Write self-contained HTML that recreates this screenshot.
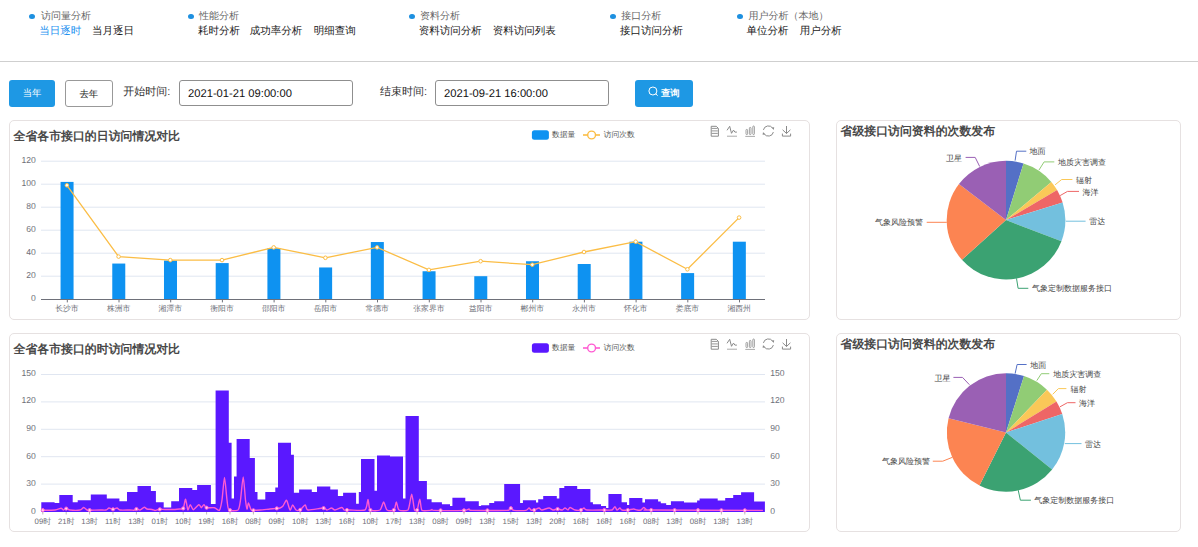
<!DOCTYPE html>
<html><head><meta charset="utf-8"><style>
html,body{margin:0;padding:0;background:#fff;width:1198px;height:547px;overflow:hidden;position:relative;font-family:"Liberation Sans", sans-serif;text-rendering:geometricPrecision;}
.dot{position:absolute;width:6px;height:6px;border-radius:50%;background:#1e90e0;}
.nt{position:absolute;font-size:10px;line-height:16px;color:#666;white-space:nowrap;}
.ns{position:absolute;font-size:10.5px;line-height:16px;color:#1a1a1a;font-weight:500;white-space:nowrap;}
.ns.act{color:#1a90f0;}
.hr{position:absolute;left:0;top:60.5px;width:1198px;height:1.5px;background:#cfcfcf;}
.btn{position:absolute;box-sizing:border-box;border-radius:3px;font-size:9.4px;font-weight:500;text-align:center;}
.lbl{position:absolute;font-size:11px;color:#333;white-space:nowrap;}
.inp{position:absolute;box-sizing:border-box;border:1px solid #8f8f8f;border-radius:3px;font-size:11.2px;color:#111;padding-left:8px;}
.card{position:absolute;box-sizing:border-box;border:1px solid #e6e1e1;border-radius:5px;background:#fff;}
.ttl{position:absolute;font-size:11.9px;font-weight:bold;color:#484848;white-space:nowrap;}
svg{position:absolute;left:0;top:0;}
svg text{font-family:"Liberation Sans", sans-serif;text-rendering:geometricPrecision;}
.ax{font-size:7.8px;fill:#6e7079;}
.num{font-size:8.6px;fill:#6e7079;}
.lg{font-size:7.8px;fill:#555;}
.pl{font-size:8px;fill:#444;}
</style></head><body>
<div class="dot" style="left:29.0px;top:14px;height:5.3px"></div><div class="nt" style="left:41.0px;top:8.5px">访问量分析</div><div class="ns act" style="left:39.3px;top:22.8px">当日逐时</div><div class="ns" style="left:92.1px;top:22.8px">当月逐日</div><div class="dot" style="left:187.5px;top:14px;height:5.3px"></div><div class="nt" style="left:199.1px;top:8.5px">性能分析</div><div class="ns" style="left:198.0px;top:22.8px">耗时分析</div><div class="ns" style="left:249.8px;top:22.8px">成功率分析</div><div class="ns" style="left:313.7px;top:22.8px">明细查询</div><div class="dot" style="left:408.7px;top:14px;height:5.3px"></div><div class="nt" style="left:420.0px;top:8.5px">资料分析</div><div class="ns" style="left:418.8px;top:22.8px">资料访问分析</div><div class="ns" style="left:492.7px;top:22.8px">资料访问列表</div><div class="dot" style="left:609.9px;top:14px;height:5.3px"></div><div class="nt" style="left:621.2px;top:8.5px">接口分析</div><div class="ns" style="left:620.0px;top:22.8px">接口访问分析</div><div class="dot" style="left:737.2px;top:14px;height:5.3px"></div><div class="nt" style="left:748.5px;top:8.5px">用户分析（本地）</div><div class="ns" style="left:746.4px;top:22.8px">单位分析</div><div class="ns" style="left:799.8px;top:22.8px">用户分析</div>
<div class="hr"></div>
<div class="btn" style="left:9px;top:80px;width:46px;height:27px;line-height:25.8px;background:#1e98e4;color:#fff;">当年</div>
<div class="btn" style="left:65px;top:80px;width:47.5px;height:27px;line-height:25.6px;border:1px solid #999;color:#1a1a1a;">去年</div>
<div class="lbl" style="left:123.3px;top:85px;">开始时间:</div>
<div class="inp" style="left:179px;top:80px;width:174px;height:25.5px;line-height:26.2px;">2021-01-21 09:00:00</div>
<div class="lbl" style="left:380px;top:85px;">结束时间:</div>
<div class="inp" style="left:435px;top:80px;width:174px;height:25.5px;line-height:26.2px;">2021-09-21 16:00:00</div>
<div class="btn" style="left:635px;top:80px;width:58px;height:27px;line-height:27px;background:#1e98e4;color:#fff;"><svg style="position:absolute;left:7px;top:5px" width="20" height="20"><circle cx="10.9" cy="6" r="4" fill="none" stroke="#fff" stroke-width="1"/><line x1="13.6" y1="8.8" x2="15.7" y2="10.6" stroke="#fff" stroke-width="1"/></svg><span style="position:absolute;left:26px;top:0.3px;font-size:9.3px;font-weight:bold;line-height:26px;">查询</span></div>
<div class="card" style="left:9px;top:120px;width:801px;height:199.5px;"></div>
<div class="card" style="left:836px;top:120px;width:345px;height:199.5px;"></div>
<div class="card" style="left:9px;top:333px;width:801px;height:198.5px;"></div>
<div class="card" style="left:836px;top:333px;width:345px;height:198.5px;"></div>
<div class="ttl" style="left:13.5px;top:129.2px;">全省各市接口的日访问情况对比</div>
<div class="ttl" style="left:13.5px;top:342.2px;">全省各市接口的时访问情况对比</div>
<div class="ttl" style="left:840.5px;top:124.3px;">省级接口访问资料的次数发布</div>
<div class="ttl" style="left:840.5px;top:337.3px;">省级接口访问资料的次数发布</div>
<svg width="1198" height="547" viewBox="0 0 1198 547"><line x1="41" y1="276.2" x2="765" y2="276.2" stroke="#e0e6f1" stroke-width="1"/><line x1="41" y1="253.2" x2="765" y2="253.2" stroke="#e0e6f1" stroke-width="1"/><line x1="41" y1="230.2" x2="765" y2="230.2" stroke="#e0e6f1" stroke-width="1"/><line x1="41" y1="207.2" x2="765" y2="207.2" stroke="#e0e6f1" stroke-width="1"/><line x1="41" y1="184.2" x2="765" y2="184.2" stroke="#e0e6f1" stroke-width="1"/><line x1="41" y1="161.2" x2="765" y2="161.2" stroke="#e0e6f1" stroke-width="1"/><text x="35.8" y="301.0" text-anchor="end" class="num">0</text><text x="35.8" y="278.0" text-anchor="end" class="num">20</text><text x="35.8" y="255.0" text-anchor="end" class="num">40</text><text x="35.8" y="232.0" text-anchor="end" class="num">60</text><text x="35.8" y="209.0" text-anchor="end" class="num">80</text><text x="35.8" y="186.0" text-anchor="end" class="num">100</text><text x="35.8" y="163.0" text-anchor="end" class="num">120</text><rect x="60.56" y="181.90" width="13.0" height="117.30" fill="#0e92f1"/><text x="66.9" y="310.6" text-anchor="middle" class="ax">长沙市</text><line x1="67.3" y1="299.7" x2="67.3" y2="302.4" stroke="#6e7079" stroke-width="1"/><rect x="112.27" y="263.55" width="13.0" height="35.65" fill="#0e92f1"/><text x="118.6" y="310.6" text-anchor="middle" class="ax">株洲市</text><line x1="119.0" y1="299.7" x2="119.0" y2="302.4" stroke="#6e7079" stroke-width="1"/><rect x="163.99" y="260.56" width="13.0" height="38.64" fill="#0e92f1"/><text x="170.3" y="310.6" text-anchor="middle" class="ax">湘潭市</text><line x1="170.7" y1="299.7" x2="170.7" y2="302.4" stroke="#6e7079" stroke-width="1"/><rect x="215.70" y="263.09" width="13.0" height="36.11" fill="#0e92f1"/><text x="222.0" y="310.6" text-anchor="middle" class="ax">衡阳市</text><line x1="222.4" y1="299.7" x2="222.4" y2="302.4" stroke="#6e7079" stroke-width="1"/><rect x="267.41" y="248.25" width="13.0" height="50.94" fill="#0e92f1"/><text x="273.7" y="310.6" text-anchor="middle" class="ax">邵阳市</text><line x1="274.1" y1="299.7" x2="274.1" y2="302.4" stroke="#6e7079" stroke-width="1"/><rect x="319.13" y="267.46" width="13.0" height="31.74" fill="#0e92f1"/><text x="325.4" y="310.6" text-anchor="middle" class="ax">岳阳市</text><line x1="325.8" y1="299.7" x2="325.8" y2="302.4" stroke="#6e7079" stroke-width="1"/><rect x="370.84" y="242.04" width="13.0" height="57.16" fill="#0e92f1"/><text x="377.1" y="310.6" text-anchor="middle" class="ax">常德市</text><line x1="377.5" y1="299.7" x2="377.5" y2="302.4" stroke="#6e7079" stroke-width="1"/><rect x="422.56" y="271.25" width="13.0" height="27.95" fill="#0e92f1"/><text x="428.9" y="310.6" text-anchor="middle" class="ax">张家界市</text><line x1="429.3" y1="299.7" x2="429.3" y2="302.4" stroke="#6e7079" stroke-width="1"/><rect x="474.27" y="276.20" width="13.0" height="23.00" fill="#0e92f1"/><text x="480.6" y="310.6" text-anchor="middle" class="ax">益阳市</text><line x1="481.0" y1="299.7" x2="481.0" y2="302.4" stroke="#6e7079" stroke-width="1"/><rect x="525.99" y="261.25" width="13.0" height="37.95" fill="#0e92f1"/><text x="532.3" y="310.6" text-anchor="middle" class="ax">郴州市</text><line x1="532.7" y1="299.7" x2="532.7" y2="302.4" stroke="#6e7079" stroke-width="1"/><rect x="577.70" y="264.01" width="13.0" height="35.19" fill="#0e92f1"/><text x="584.0" y="310.6" text-anchor="middle" class="ax">永州市</text><line x1="584.4" y1="299.7" x2="584.4" y2="302.4" stroke="#6e7079" stroke-width="1"/><rect x="629.41" y="241.70" width="13.0" height="57.50" fill="#0e92f1"/><text x="635.7" y="310.6" text-anchor="middle" class="ax">怀化市</text><line x1="636.1" y1="299.7" x2="636.1" y2="302.4" stroke="#6e7079" stroke-width="1"/><rect x="681.13" y="273.09" width="13.0" height="26.10" fill="#0e92f1"/><text x="687.4" y="310.6" text-anchor="middle" class="ax">娄底市</text><line x1="687.8" y1="299.7" x2="687.8" y2="302.4" stroke="#6e7079" stroke-width="1"/><rect x="732.84" y="241.70" width="13.0" height="57.50" fill="#0e92f1"/><text x="739.1" y="310.6" text-anchor="middle" class="ax">湘西州</text><line x1="739.5" y1="299.7" x2="739.5" y2="302.4" stroke="#6e7079" stroke-width="1"/><line x1="41" y1="299.5" x2="765" y2="299.5" stroke="#6e7079" stroke-width="1"/><polyline fill="none" stroke="#fbbd45" stroke-width="1.3" points="66.9,185.3 118.6,256.6 170.3,260.1 222.0,260.1 273.7,247.4 325.4,257.8 377.1,247.4 428.9,269.9 480.6,261.2 532.3,264.7 584.0,252.0 635.7,241.7 687.4,269.3 739.1,217.6"/><circle cx="66.9" cy="185.3" r="1.8" fill="#fff" stroke="#fbbd45" stroke-width="1"/><circle cx="118.6" cy="256.6" r="1.8" fill="#fff" stroke="#fbbd45" stroke-width="1"/><circle cx="170.3" cy="260.1" r="1.8" fill="#fff" stroke="#fbbd45" stroke-width="1"/><circle cx="222.0" cy="260.1" r="1.8" fill="#fff" stroke="#fbbd45" stroke-width="1"/><circle cx="273.7" cy="247.4" r="1.8" fill="#fff" stroke="#fbbd45" stroke-width="1"/><circle cx="325.4" cy="257.8" r="1.8" fill="#fff" stroke="#fbbd45" stroke-width="1"/><circle cx="377.1" cy="247.4" r="1.8" fill="#fff" stroke="#fbbd45" stroke-width="1"/><circle cx="428.9" cy="269.9" r="1.8" fill="#fff" stroke="#fbbd45" stroke-width="1"/><circle cx="480.6" cy="261.2" r="1.8" fill="#fff" stroke="#fbbd45" stroke-width="1"/><circle cx="532.3" cy="264.7" r="1.8" fill="#fff" stroke="#fbbd45" stroke-width="1"/><circle cx="584.0" cy="252.0" r="1.8" fill="#fff" stroke="#fbbd45" stroke-width="1"/><circle cx="635.7" cy="241.7" r="1.8" fill="#fff" stroke="#fbbd45" stroke-width="1"/><circle cx="687.4" cy="269.3" r="1.8" fill="#fff" stroke="#fbbd45" stroke-width="1"/><circle cx="739.1" cy="217.6" r="1.8" fill="#fff" stroke="#fbbd45" stroke-width="1"/><line x1="41" y1="484.1" x2="765" y2="484.1" stroke="#e0e6f1" stroke-width="1"/><line x1="41" y1="456.7" x2="765" y2="456.7" stroke="#e0e6f1" stroke-width="1"/><line x1="41" y1="429.3" x2="765" y2="429.3" stroke="#e0e6f1" stroke-width="1"/><line x1="41" y1="401.9" x2="765" y2="401.9" stroke="#e0e6f1" stroke-width="1"/><line x1="41" y1="374.5" x2="765" y2="374.5" stroke="#e0e6f1" stroke-width="1"/><text x="35.8" y="513.6" text-anchor="end" class="num">0</text><text x="770.2" y="513.6" text-anchor="start" class="num">0</text><text x="35.8" y="486.1" text-anchor="end" class="num">30</text><text x="770.2" y="486.1" text-anchor="start" class="num">30</text><text x="35.8" y="458.5" text-anchor="end" class="num">60</text><text x="770.2" y="458.5" text-anchor="start" class="num">60</text><text x="35.8" y="431.0" text-anchor="end" class="num">90</text><text x="770.2" y="431.0" text-anchor="start" class="num">90</text><text x="35.8" y="403.4" text-anchor="end" class="num">120</text><text x="770.2" y="403.4" text-anchor="start" class="num">120</text><text x="35.8" y="375.9" text-anchor="end" class="num">150</text><text x="770.2" y="375.9" text-anchor="start" class="num">150</text><path d="M41.3,512.0 L41.3,502.2 L54.6,502.2 L54.6,503.0 L59.3,503.0 L59.3,494.9 L72.7,494.9 L72.7,502.2 L77.7,502.2 L77.7,500.2 L90.8,500.2 L90.8,494.6 L106.8,494.6 L106.8,498.6 L119.4,498.6 L119.4,501.2 L127.0,501.2 L127.0,492.1 L137.5,492.1 L137.5,486.1 L150.9,486.1 L150.9,491.1 L155.9,491.1 L155.9,502.2 L163.7,502.2 L163.7,507.4 L171.2,507.4 L171.2,501.2 L179.0,501.2 L179.0,487.9 L192.3,487.9 L192.3,490.1 L197.1,490.1 L197.1,484.9 L210.9,484.9 L210.9,504.0 L215.6,504.0 L215.6,390.5 L228.8,390.5 L228.8,442.7 L231.6,442.7 L231.6,498.6 L234.0,498.6 L234.0,476.5 L236.6,476.5 L236.6,439.0 L249.7,439.0 L249.7,458.1 L254.9,458.1 L254.9,492.0 L257.5,492.0 L257.5,499.4 L265.3,499.4 L265.3,492.0 L275.3,492.0 L275.3,487.6 L278.0,487.6 L278.0,442.7 L291.0,442.7 L291.0,454.7 L293.9,454.7 L293.9,492.8 L299.1,492.8 L299.1,489.4 L311.8,489.4 L311.8,492.0 L317.0,492.0 L317.0,486.4 L330.3,486.4 L330.3,489.4 L337.9,489.4 L337.9,496.0 L343.1,496.0 L343.1,492.8 L356.1,492.8 L356.1,503.8 L358.8,503.8 L358.8,492.0 L361.0,492.0 L361.0,459.0 L374.5,459.0 L374.5,490.8 L377.0,490.8 L377.0,455.5 L390.0,455.5 L390.0,456.4 L403.0,456.4 L403.0,498.6 L405.5,498.6 L405.5,416.0 L418.8,416.0 L418.8,481.1 L426.9,481.1 L426.9,499.3 L431.6,499.3 L431.6,502.2 L441.9,502.2 L441.9,504.2 L450.0,504.2 L450.0,506.0 L452.4,506.0 L452.4,497.8 L465.3,497.8 L465.3,501.2 L478.8,501.2 L478.8,505.9 L481.1,505.9 L481.1,505.2 L489.2,505.2 L489.2,503.0 L494.2,503.0 L494.2,501.2 L504.2,501.2 L504.2,484.1 L520.1,484.1 L520.1,503.0 L522.9,503.0 L522.9,500.2 L536.0,500.2 L536.0,502.4 L538.2,502.4 L538.2,499.3 L543.2,499.3 L543.2,496.1 L556.8,496.1 L556.8,498.6 L559.3,498.6 L559.3,487.9 L564.3,487.9 L564.3,485.9 L577.2,485.9 L577.2,489.1 L590.4,489.1 L590.4,502.2 L592.9,502.2 L592.9,504.2 L601.0,504.2 L601.0,506.0 L606.1,506.0 L606.1,508.0 L608.4,508.0 L608.4,494.1 L621.6,494.1 L621.6,502.2 L627.0,502.2 L627.0,505.0 L629.2,505.0 L629.2,497.9 L642.4,497.9 L642.4,502.4 L645.0,502.4 L645.0,499.3 L658.1,499.3 L658.1,501.4 L660.8,501.4 L660.8,503.2 L666.2,503.2 L666.2,505.0 L670.9,505.0 L670.9,501.2 L684.0,501.2 L684.0,502.4 L697.1,502.4 L697.1,500.4 L699.6,500.4 L699.6,498.6 L717.7,498.6 L717.7,500.4 L725.2,500.4 L725.2,497.9 L733.2,497.9 L733.2,495.1 L741.1,495.1 L741.1,492.3 L754.1,492.3 L754.1,501.4 L764.9,501.4 L764.9,512.0 Z" fill="#5a18ff"/><path fill="none" stroke="#ff5ad2" stroke-width="1.4" stroke-linejoin="round" d="M41.5,510.2 C43.12,510.18 52.66,510.24 55.0,510.0 C57.34,509.76 59.98,508.20 61.0,508.2 C62.02,508.20 62.85,509.96 63.5,510.0 C64.15,510.04 65.62,508.50 66.4,508.5 C67.18,508.50 68.37,509.82 70.0,510.0 C71.63,510.18 78.36,510.30 80.0,510.0 C81.64,509.70 82.86,507.50 83.7,507.5 C84.54,507.50 86.30,509.68 87.0,510.0 C87.70,510.32 87.94,510.20 89.5,510.2 C91.06,510.20 98.02,510.02 100.0,510.0 C101.98,509.98 104.92,510.24 106.0,510.0 C107.08,509.76 108.17,508.08 109.0,508.0 C109.83,507.92 111.94,509.30 112.9,509.3 C113.86,509.30 116.15,507.92 117.0,508.0 C117.85,508.08 118.44,509.76 120.0,510.0 C121.56,510.24 128.32,509.98 130.0,510.0 C131.68,510.02 133.22,510.32 134.0,510.2 C134.78,510.08 135.78,509.02 136.5,509.0 C137.22,508.98 139.06,510.20 140.0,510.0 C140.94,509.80 143.46,507.42 144.3,507.3 C145.14,507.18 146.08,508.74 147.0,509.0 C147.92,509.26 151.04,509.32 152.0,509.5 C152.96,509.68 154.11,510.52 155.0,510.5 C155.89,510.48 158.20,509.42 159.4,509.3 C160.60,509.18 163.13,509.48 165.0,509.5 C166.87,509.52 173.20,509.56 175.0,509.5 C176.80,509.44 179.00,509.13 180.0,509.0 C181.00,508.87 182.63,509.59 183.3,508.4 C183.97,507.21 185.06,498.94 185.6,499.1 C186.14,499.26 187.24,509.03 187.8,509.7 C188.36,510.37 189.64,504.70 190.3,504.7 C190.96,504.70 192.28,509.70 193.3,509.7 C194.32,509.70 197.83,504.94 198.8,504.7 C199.77,504.46 200.79,507.70 201.4,507.7 C202.01,507.70 203.28,504.70 203.9,504.7 C204.52,504.70 205.34,507.34 206.6,507.7 C207.86,508.06 212.86,507.40 214.4,507.7 C215.94,508.00 218.49,511.00 219.4,510.2 C220.31,509.28 221.39,503.92 222.0,500.0 C222.61,496.08 223.90,477.50 224.5,477.5 C225.10,477.50 226.46,496.08 227.0,500.0 C227.54,503.92 227.68,509.00 229.0,510.2 C230.32,511.00 236.62,511.00 238.0,510.0 C239.38,508.78 239.88,503.96 240.5,500.0 C241.12,496.04 242.60,477.00 243.2,477.0 C243.80,477.00 245.04,496.16 245.5,500.0 C245.96,503.84 246.65,508.64 247.0,509.0 C247.35,509.36 247.92,502.94 248.4,503.0 C248.88,503.06 250.41,508.62 251.0,509.5 C251.59,510.38 252.22,510.24 253.3,510.3 C254.38,510.36 258.00,510.16 260.0,510.0 C262.00,509.84 268.00,509.19 270.0,509.0 C272.00,508.81 275.50,508.52 276.7,508.4 C277.90,508.28 279.24,508.29 280.0,508.0 C280.76,507.71 282.21,506.92 283.0,506.0 C283.79,505.08 285.76,499.82 286.6,500.3 C287.44,500.78 289.27,509.44 290.0,510.0 C290.73,510.56 291.98,505.00 292.7,505.0 C293.42,505.00 295.12,509.40 296.0,510.0 C296.88,510.60 298.90,510.60 300.0,510.0 C301.10,509.40 304.24,505.00 305.2,505.0 C306.16,505.00 305.82,509.64 308.0,510.0 C310.18,510.36 321.12,508.00 323.4,508.0 C325.68,508.00 326.03,510.00 327.0,510.0 C327.97,510.00 330.54,508.00 331.5,508.0 C332.46,508.00 333.75,510.06 335.0,510.0 C336.25,509.94 340.82,507.50 341.9,507.5 C342.98,507.50 343.41,509.70 344.0,510.0 C344.59,510.30 346.08,510.00 346.8,510.0 C347.52,510.00 347.82,510.00 350.0,510.0 C352.18,510.00 362.84,511.00 365.0,510.0 C367.16,508.73 367.38,499.40 368.0,499.4 C368.62,499.40 368.76,508.73 370.2,510.0 C371.64,511.00 378.39,510.96 380.0,510.0 C381.61,509.04 382.76,502.00 383.6,502.0 C384.44,502.00 385.75,509.04 387.0,510.0 C388.25,510.96 392.88,510.96 394.0,510.0 C395.12,509.04 395.70,502.00 396.3,502.0 C396.90,502.00 397.60,509.04 399.0,510.0 C400.40,510.96 406.48,511.00 408.0,510.0 C409.52,508.10 410.92,494.20 411.7,494.2 C412.48,494.20 413.84,508.10 414.5,510.0 C415.16,511.00 416.56,511.00 417.2,510.0 C417.84,508.69 419.22,499.05 419.8,499.1 C420.38,499.15 420.78,509.04 422.0,510.4 C423.22,511.00 428.80,510.51 430.0,510.4 C431.20,510.29 431.52,509.50 432.0,509.5 C432.48,509.50 430.16,510.29 434.0,510.4 C437.84,510.51 459.80,510.57 464.0,510.4 C468.20,510.23 468.04,509.00 469.0,509.0 C469.96,509.00 467.44,510.23 472.0,510.4 C476.56,510.57 502.34,510.66 507.0,510.4 C511.66,510.14 509.96,508.20 510.8,508.2 C511.64,508.20 512.18,510.14 514.0,510.4 C515.82,510.66 524.20,510.69 526.0,510.4 C527.80,510.11 528.40,508.05 529.0,508.0 C529.60,507.95 530.36,509.76 531.0,510.0 C531.64,510.24 533.34,510.24 534.3,510.0 C535.26,509.76 538.08,508.00 539.0,508.0 C539.92,508.00 540.80,510.00 542.0,510.0 C543.20,510.00 547.68,508.00 549.0,508.0 C550.32,508.00 551.98,509.88 553.0,510.0 C554.02,510.12 556.42,509.00 557.5,509.0 C558.58,509.00 561.10,510.12 562.0,510.0 C562.90,509.88 564.28,508.00 565.0,508.0 C565.72,508.00 567.40,510.06 568.0,510.0 C568.60,509.94 569.16,507.50 570.0,507.5 C570.84,507.50 573.66,509.70 575.0,510.0 C576.34,510.30 580.12,510.24 581.2,510.0 C582.28,509.76 583.30,508.00 584.0,508.0 C584.70,508.00 584.56,509.76 587.0,510.0 C589.44,510.24 601.30,510.00 604.3,510.0 C607.30,510.00 610.73,510.40 612.0,510.0 C613.27,509.60 614.30,506.70 614.9,506.7 C615.50,506.70 616.40,509.84 617.0,510.0 C617.60,510.16 619.30,508.00 619.9,508.0 C620.50,508.00 621.03,509.76 622.0,510.0 C622.97,510.24 626.60,510.12 628.0,510.0 C629.40,509.88 632.62,509.00 633.7,509.0 C634.78,509.00 636.12,509.88 637.0,510.0 C637.88,510.12 640.20,510.30 641.0,510.0 C641.80,509.70 642.98,507.50 643.7,507.5 C644.42,507.50 646.09,509.70 647.0,510.0 C647.91,510.30 637.39,509.95 651.3,510.0 C665.21,510.05 749.51,510.35 762.9,510.4 "/><circle cx="42.8" cy="510.2" r="1.6" fill="#ffd0f2" stroke="#ff5ad2" stroke-width="1"/><line x1="42.8" y1="512.0" x2="42.8" y2="514.5" stroke="#aaa" stroke-width="0.8"/><text x="42.8" y="523.6" text-anchor="middle" class="ax">09时</text><circle cx="66.2" cy="508.6" r="1.6" fill="#ffd0f2" stroke="#ff5ad2" stroke-width="1"/><line x1="66.2" y1="512.0" x2="66.2" y2="514.5" stroke="#aaa" stroke-width="0.8"/><text x="66.2" y="523.6" text-anchor="middle" class="ax">21时</text><circle cx="89.6" cy="510.2" r="1.6" fill="#ffd0f2" stroke="#ff5ad2" stroke-width="1"/><line x1="89.6" y1="512.0" x2="89.6" y2="514.5" stroke="#aaa" stroke-width="0.8"/><text x="89.6" y="523.6" text-anchor="middle" class="ax">13时</text><circle cx="113.0" cy="509.3" r="1.6" fill="#ffd0f2" stroke="#ff5ad2" stroke-width="1"/><line x1="113.0" y1="512.0" x2="113.0" y2="514.5" stroke="#aaa" stroke-width="0.8"/><text x="113.0" y="523.6" text-anchor="middle" class="ax">11时</text><circle cx="136.4" cy="509.0" r="1.6" fill="#ffd0f2" stroke="#ff5ad2" stroke-width="1"/><line x1="136.4" y1="512.0" x2="136.4" y2="514.5" stroke="#aaa" stroke-width="0.8"/><text x="136.4" y="523.6" text-anchor="middle" class="ax">13时</text><circle cx="159.8" cy="509.3" r="1.6" fill="#ffd0f2" stroke="#ff5ad2" stroke-width="1"/><line x1="159.8" y1="512.0" x2="159.8" y2="514.5" stroke="#aaa" stroke-width="0.8"/><text x="159.8" y="523.6" text-anchor="middle" class="ax">01时</text><circle cx="183.2" cy="508.4" r="1.6" fill="#ffd0f2" stroke="#ff5ad2" stroke-width="1"/><line x1="183.2" y1="512.0" x2="183.2" y2="514.5" stroke="#aaa" stroke-width="0.8"/><text x="183.2" y="523.6" text-anchor="middle" class="ax">10时</text><circle cx="206.6" cy="507.7" r="1.6" fill="#ffd0f2" stroke="#ff5ad2" stroke-width="1"/><line x1="206.6" y1="512.0" x2="206.6" y2="514.5" stroke="#aaa" stroke-width="0.8"/><text x="206.6" y="523.6" text-anchor="middle" class="ax">19时</text><circle cx="230.0" cy="510.2" r="1.6" fill="#ffd0f2" stroke="#ff5ad2" stroke-width="1"/><line x1="230.0" y1="512.0" x2="230.0" y2="514.5" stroke="#aaa" stroke-width="0.8"/><text x="230.0" y="523.6" text-anchor="middle" class="ax">16时</text><circle cx="253.4" cy="510.3" r="1.6" fill="#ffd0f2" stroke="#ff5ad2" stroke-width="1"/><line x1="253.4" y1="512.0" x2="253.4" y2="514.5" stroke="#aaa" stroke-width="0.8"/><text x="253.4" y="523.6" text-anchor="middle" class="ax">08时</text><circle cx="276.8" cy="508.4" r="1.6" fill="#ffd0f2" stroke="#ff5ad2" stroke-width="1"/><line x1="276.8" y1="512.0" x2="276.8" y2="514.5" stroke="#aaa" stroke-width="0.8"/><text x="276.8" y="523.6" text-anchor="middle" class="ax">09时</text><circle cx="300.2" cy="509.8" r="1.6" fill="#ffd0f2" stroke="#ff5ad2" stroke-width="1"/><line x1="300.2" y1="512.0" x2="300.2" y2="514.5" stroke="#aaa" stroke-width="0.8"/><text x="300.2" y="523.6" text-anchor="middle" class="ax">10时</text><circle cx="323.6" cy="508.1" r="1.6" fill="#ffd0f2" stroke="#ff5ad2" stroke-width="1"/><line x1="323.6" y1="512.0" x2="323.6" y2="514.5" stroke="#aaa" stroke-width="0.8"/><text x="323.6" y="523.6" text-anchor="middle" class="ax">13时</text><circle cx="347.0" cy="510.0" r="1.6" fill="#ffd0f2" stroke="#ff5ad2" stroke-width="1"/><line x1="347.0" y1="512.0" x2="347.0" y2="514.5" stroke="#aaa" stroke-width="0.8"/><text x="347.0" y="523.6" text-anchor="middle" class="ax">16时</text><circle cx="370.4" cy="510.0" r="1.6" fill="#ffd0f2" stroke="#ff5ad2" stroke-width="1"/><line x1="370.4" y1="512.0" x2="370.4" y2="514.5" stroke="#aaa" stroke-width="0.8"/><text x="370.4" y="523.6" text-anchor="middle" class="ax">10时</text><circle cx="393.8" cy="510.0" r="1.6" fill="#ffd0f2" stroke="#ff5ad2" stroke-width="1"/><line x1="393.8" y1="512.0" x2="393.8" y2="514.5" stroke="#aaa" stroke-width="0.8"/><text x="393.8" y="523.6" text-anchor="middle" class="ax">17时</text><circle cx="417.2" cy="510.0" r="1.6" fill="#ffd0f2" stroke="#ff5ad2" stroke-width="1"/><line x1="417.2" y1="512.0" x2="417.2" y2="514.5" stroke="#aaa" stroke-width="0.8"/><text x="417.2" y="523.6" text-anchor="middle" class="ax">13时</text><circle cx="440.6" cy="510.4" r="1.6" fill="#ffd0f2" stroke="#ff5ad2" stroke-width="1"/><line x1="440.6" y1="512.0" x2="440.6" y2="514.5" stroke="#aaa" stroke-width="0.8"/><text x="440.6" y="523.6" text-anchor="middle" class="ax">08时</text><circle cx="464.0" cy="510.4" r="1.6" fill="#ffd0f2" stroke="#ff5ad2" stroke-width="1"/><line x1="464.0" y1="512.0" x2="464.0" y2="514.5" stroke="#aaa" stroke-width="0.8"/><text x="464.0" y="523.6" text-anchor="middle" class="ax">09时</text><circle cx="487.4" cy="510.4" r="1.6" fill="#ffd0f2" stroke="#ff5ad2" stroke-width="1"/><line x1="487.4" y1="512.0" x2="487.4" y2="514.5" stroke="#aaa" stroke-width="0.8"/><text x="487.4" y="523.6" text-anchor="middle" class="ax">13时</text><circle cx="510.8" cy="508.2" r="1.6" fill="#ffd0f2" stroke="#ff5ad2" stroke-width="1"/><line x1="510.8" y1="512.0" x2="510.8" y2="514.5" stroke="#aaa" stroke-width="0.8"/><text x="510.8" y="523.6" text-anchor="middle" class="ax">15时</text><circle cx="534.2" cy="510.0" r="1.6" fill="#ffd0f2" stroke="#ff5ad2" stroke-width="1"/><line x1="534.2" y1="512.0" x2="534.2" y2="514.5" stroke="#aaa" stroke-width="0.8"/><text x="534.2" y="523.6" text-anchor="middle" class="ax">13时</text><circle cx="557.6" cy="509.0" r="1.6" fill="#ffd0f2" stroke="#ff5ad2" stroke-width="1"/><line x1="557.6" y1="512.0" x2="557.6" y2="514.5" stroke="#aaa" stroke-width="0.8"/><text x="557.6" y="523.6" text-anchor="middle" class="ax">20时</text><circle cx="581.0" cy="510.0" r="1.6" fill="#ffd0f2" stroke="#ff5ad2" stroke-width="1"/><line x1="581.0" y1="512.0" x2="581.0" y2="514.5" stroke="#aaa" stroke-width="0.8"/><text x="581.0" y="523.6" text-anchor="middle" class="ax">16时</text><circle cx="604.4" cy="510.0" r="1.6" fill="#ffd0f2" stroke="#ff5ad2" stroke-width="1"/><line x1="604.4" y1="512.0" x2="604.4" y2="514.5" stroke="#aaa" stroke-width="0.8"/><text x="604.4" y="523.6" text-anchor="middle" class="ax">16时</text><circle cx="627.8" cy="510.0" r="1.6" fill="#ffd0f2" stroke="#ff5ad2" stroke-width="1"/><line x1="627.8" y1="512.0" x2="627.8" y2="514.5" stroke="#aaa" stroke-width="0.8"/><text x="627.8" y="523.6" text-anchor="middle" class="ax">16时</text><circle cx="651.2" cy="510.0" r="1.6" fill="#ffd0f2" stroke="#ff5ad2" stroke-width="1"/><line x1="651.2" y1="512.0" x2="651.2" y2="514.5" stroke="#aaa" stroke-width="0.8"/><text x="651.2" y="523.6" text-anchor="middle" class="ax">08时</text><circle cx="674.6" cy="510.1" r="1.6" fill="#ffd0f2" stroke="#ff5ad2" stroke-width="1"/><line x1="674.6" y1="512.0" x2="674.6" y2="514.5" stroke="#aaa" stroke-width="0.8"/><text x="674.6" y="523.6" text-anchor="middle" class="ax">13时</text><circle cx="698.0" cy="510.2" r="1.6" fill="#ffd0f2" stroke="#ff5ad2" stroke-width="1"/><line x1="698.0" y1="512.0" x2="698.0" y2="514.5" stroke="#aaa" stroke-width="0.8"/><text x="698.0" y="523.6" text-anchor="middle" class="ax">08时</text><circle cx="721.4" cy="510.3" r="1.6" fill="#ffd0f2" stroke="#ff5ad2" stroke-width="1"/><line x1="721.4" y1="512.0" x2="721.4" y2="514.5" stroke="#aaa" stroke-width="0.8"/><text x="721.4" y="523.6" text-anchor="middle" class="ax">13时</text><circle cx="744.8" cy="510.3" r="1.6" fill="#ffd0f2" stroke="#ff5ad2" stroke-width="1"/><line x1="744.8" y1="512.0" x2="744.8" y2="514.5" stroke="#aaa" stroke-width="0.8"/><text x="744.8" y="523.6" text-anchor="middle" class="ax">13时</text><rect x="531.9" y="130.3" width="17" height="9.5" rx="2.5" fill="#0e92f1"/><text x="552" y="136.8" class="lg">数据量</text><line x1="583" y1="135.0" x2="600" y2="135.0" stroke="#fbbd45" stroke-width="1.6"/><circle cx="591.6" cy="135.0" r="3.9" fill="#fff" stroke="#fbbd45" stroke-width="1.4"/><text x="603.6" y="136.8" class="lg">访问次数</text><rect x="531.9" y="343.3" width="17" height="9.5" rx="2.5" fill="#5a18ff"/><text x="552" y="349.8" class="lg">数据量</text><line x1="583" y1="348.0" x2="600" y2="348.0" stroke="#ff5ad2" stroke-width="1.6"/><circle cx="591.6" cy="348.0" r="3.9" fill="#fff" stroke="#ff5ad2" stroke-width="1.4"/><text x="603.6" y="349.8" class="lg">访问次数</text><path d="M711.20,126.30 L716.30,126.30 L718.40,128.40 L718.40,136.20 L711.20,136.20 Z" fill="none" stroke="#8a8a8a" stroke-width="1"/><line x1="711.6" y1="128.40" x2="717.8" y2="128.40" stroke="#8a8a8a" stroke-width="0.9"/><line x1="711.6" y1="130.90" x2="717.8" y2="130.90" stroke="#8a8a8a" stroke-width="0.9"/><line x1="711.6" y1="133.40" x2="717.8" y2="133.40" stroke="#8a8a8a" stroke-width="0.9"/><polyline fill="none" stroke="#8a8a8a" stroke-width="1" stroke-linejoin="round" points="727.00,130.30 729.70,126.30 731.50,133.30 733.50,130.10 734.90,132.10 736.90,132.10"/><line x1="727" y1="136.20" x2="737" y2="136.20" stroke="#aaa" stroke-width="1"/><rect x="746.00" y="129.40" width="1.60" height="5.20" rx="0.8" fill="none" stroke="#8a8a8a" stroke-width="0.8"/><rect x="749.40" y="127.40" width="1.60" height="7.20" rx="0.8" fill="none" stroke="#8a8a8a" stroke-width="0.8"/><rect x="752.80" y="126.00" width="1.60" height="8.60" rx="0.8" fill="none" stroke="#8a8a8a" stroke-width="0.8"/><line x1="745.3" y1="136.40" x2="755" y2="136.40" stroke="#aaa" stroke-width="1"/><path d="M763.41,129.94 A5.1,5.1 0 0 1 772.73,128.30" fill="none" stroke="#8a8a8a" stroke-width="1"/><path d="M773.39,132.06 A5.1,5.1 0 0 1 764.07,133.70" fill="none" stroke="#8a8a8a" stroke-width="1"/><path d="M771.60,127.60 L774.20,127.30 L773.80,130.00 Z" fill="#8a8a8a"/><path d="M765.20,134.40 L762.60,134.70 L763.00,132.00 Z" fill="#8a8a8a"/><line x1="786.5" y1="126.00" x2="786.5" y2="133.50" stroke="#8a8a8a" stroke-width="1"/><polyline fill="none" stroke="#8a8a8a" stroke-width="1" points="782.60,129.80 786.50,133.50 790.40,129.80"/><polyline fill="none" stroke="#8a8a8a" stroke-width="1" points="782.40,133.60 782.40,136.10 790.60,136.10 790.60,133.60"/><path d="M711.20,339.30 L716.30,339.30 L718.40,341.40 L718.40,349.20 L711.20,349.20 Z" fill="none" stroke="#8a8a8a" stroke-width="1"/><line x1="711.6" y1="341.40" x2="717.8" y2="341.40" stroke="#8a8a8a" stroke-width="0.9"/><line x1="711.6" y1="343.90" x2="717.8" y2="343.90" stroke="#8a8a8a" stroke-width="0.9"/><line x1="711.6" y1="346.40" x2="717.8" y2="346.40" stroke="#8a8a8a" stroke-width="0.9"/><polyline fill="none" stroke="#8a8a8a" stroke-width="1" stroke-linejoin="round" points="727.00,343.30 729.70,339.30 731.50,346.30 733.50,343.10 734.90,345.10 736.90,345.10"/><line x1="727" y1="349.20" x2="737" y2="349.20" stroke="#aaa" stroke-width="1"/><rect x="746.00" y="342.40" width="1.60" height="5.20" rx="0.8" fill="none" stroke="#8a8a8a" stroke-width="0.8"/><rect x="749.40" y="340.40" width="1.60" height="7.20" rx="0.8" fill="none" stroke="#8a8a8a" stroke-width="0.8"/><rect x="752.80" y="339.00" width="1.60" height="8.60" rx="0.8" fill="none" stroke="#8a8a8a" stroke-width="0.8"/><line x1="745.3" y1="349.40" x2="755" y2="349.40" stroke="#aaa" stroke-width="1"/><path d="M763.41,342.94 A5.1,5.1 0 0 1 772.73,341.30" fill="none" stroke="#8a8a8a" stroke-width="1"/><path d="M773.39,345.06 A5.1,5.1 0 0 1 764.07,346.70" fill="none" stroke="#8a8a8a" stroke-width="1"/><path d="M771.60,340.60 L774.20,340.30 L773.80,343.00 Z" fill="#8a8a8a"/><path d="M765.20,347.40 L762.60,347.70 L763.00,345.00 Z" fill="#8a8a8a"/><line x1="786.5" y1="339.00" x2="786.5" y2="346.50" stroke="#8a8a8a" stroke-width="1"/><polyline fill="none" stroke="#8a8a8a" stroke-width="1" points="782.60,342.80 786.50,346.50 790.40,342.80"/><polyline fill="none" stroke="#8a8a8a" stroke-width="1" points="782.40,346.60 782.40,349.10 790.60,349.10 790.60,346.60"/><path d="M1006,220.1 L1006.00,160.80 A59.3,59.3 0 0 1 1023.54,163.45 Z" fill="#5470c6"/><path d="M1006,220.1 L1023.54,163.45 A59.3,59.3 0 0 1 1051.36,181.90 Z" fill="#91cc75"/><path d="M1006,220.1 L1051.36,181.90 A59.3,59.3 0 0 1 1057.09,190.00 Z" fill="#fac858"/><path d="M1006,220.1 L1057.09,190.00 A59.3,59.3 0 0 1 1062.62,202.47 Z" fill="#ee6666"/><path d="M1006,220.1 L1062.62,202.47 A59.3,59.3 0 0 1 1061.44,241.16 Z" fill="#73c0de"/><path d="M1006,220.1 L1061.44,241.16 A59.3,59.3 0 0 1 961.93,259.78 Z" fill="#3ba272"/><path d="M1006,220.1 L961.93,259.78 A59.3,59.3 0 0 1 958.95,184.00 Z" fill="#fc8452"/><path d="M1006,220.1 L958.95,184.00 A59.3,59.3 0 0 1 1006.00,160.80 Z" fill="#9a60b4"/><polyline fill="none" stroke="#5470c6" stroke-width="1" points="1015.1,160.6 1016.5,151.2 1026.3,151.2"/><text x="1029.6" y="154.3" text-anchor="start" class="pl">地面</text><polyline fill="none" stroke="#91cc75" stroke-width="1" points="1039.0,170.0 1044.1,161.9 1054.3,161.9"/><text x="1058.0" y="165.0" text-anchor="start" class="pl">地质灾害调查</text><polyline fill="none" stroke="#fac858" stroke-width="1" points="1055.1,184.8 1061.7,179.5 1072.4,179.5"/><text x="1076.0" y="182.6" text-anchor="start" class="pl">辐射</text><polyline fill="none" stroke="#ee6666" stroke-width="1" points="1060.1,195.6 1067.5,191.4 1079.0,191.4"/><text x="1082.6" y="194.5" text-anchor="start" class="pl">海洋</text><polyline fill="none" stroke="#73c0de" stroke-width="1" points="1065.8,221.2 1085.6,221.2"/><text x="1089.2" y="224.3" text-anchor="start" class="pl">雷达</text><polyline fill="none" stroke="#3ba272" stroke-width="1" points="1016.5,278.4 1018.1,288.3 1028.3,288.3"/><text x="1032.0" y="291.4" text-anchor="start" class="pl">气象定制数据服务接口</text><polyline fill="none" stroke="#fc8452" stroke-width="1" points="946.8,222.3 926.7,222.3"/><text x="923.1" y="225.4" text-anchor="end" class="pl">气象风险预警</text><polyline fill="none" stroke="#9a60b4" stroke-width="1" points="979.7,166.5 975.2,157.4 965.6,157.4"/><text x="962.0" y="160.5" text-anchor="end" class="pl">卫星</text><path d="M1006,432.5 L1006.00,373.30 A59.2,59.2 0 0 1 1024.00,376.10 Z" fill="#5470c6"/><path d="M1006,432.5 L1024.00,376.10 A59.2,59.2 0 0 1 1046.97,389.77 Z" fill="#91cc75"/><path d="M1006,432.5 L1046.97,389.77 A59.2,59.2 0 0 1 1056.48,401.57 Z" fill="#fac858"/><path d="M1006,432.5 L1056.48,401.57 A59.2,59.2 0 0 1 1062.24,414.01 Z" fill="#ee6666"/><path d="M1006,432.5 L1062.24,414.01 A59.2,59.2 0 0 1 1052.14,469.59 Z" fill="#73c0de"/><path d="M1006,432.5 L1052.14,469.59 A59.2,59.2 0 0 1 979.49,485.43 Z" fill="#3ba272"/><path d="M1006,432.5 L979.49,485.43 A59.2,59.2 0 0 1 948.56,418.18 Z" fill="#fc8452"/><path d="M1006,432.5 L948.56,418.18 A59.2,59.2 0 0 1 1006.00,373.30 Z" fill="#9a60b4"/><polyline fill="none" stroke="#5470c6" stroke-width="1" points="1015.1,373.7 1017.1,364.5 1026.6,364.5"/><text x="1030.2" y="367.6" text-anchor="start" class="pl">地面</text><polyline fill="none" stroke="#91cc75" stroke-width="1" points="1036.8,380.6 1041.3,373.7 1049.3,373.7"/><text x="1053.3" y="376.8" text-anchor="start" class="pl">地质灾害调查</text><polyline fill="none" stroke="#fac858" stroke-width="1" points="1052.7,394.3 1058.4,388.6 1066.4,388.6"/><text x="1070.4" y="391.7" text-anchor="start" class="pl">辐射</text><polyline fill="none" stroke="#ee6666" stroke-width="1" points="1060.0,406.8 1067.4,402.7 1075.5,402.7"/><text x="1078.9" y="405.8" text-anchor="start" class="pl">海洋</text><polyline fill="none" stroke="#73c0de" stroke-width="1" points="1064.8,443.6 1081.5,443.6"/><text x="1084.9" y="446.7" text-anchor="start" class="pl">雷达</text><polyline fill="none" stroke="#3ba272" stroke-width="1" points="1018.2,490.1 1020.4,500.2 1030.9,500.2"/><text x="1034.2" y="503.3" text-anchor="start" class="pl">气象定制数据服务接口</text><polyline fill="none" stroke="#fc8452" stroke-width="1" points="952.2,457.4 942.7,461.2 932.8,461.2"/><text x="929.9" y="464.3" text-anchor="end" class="pl">气象风险预警</text><polyline fill="none" stroke="#9a60b4" stroke-width="1" points="969.4,384.7 962.5,377.4 953.4,377.4"/><text x="950.4" y="380.5" text-anchor="end" class="pl">卫星</text></svg>
</body></html>
